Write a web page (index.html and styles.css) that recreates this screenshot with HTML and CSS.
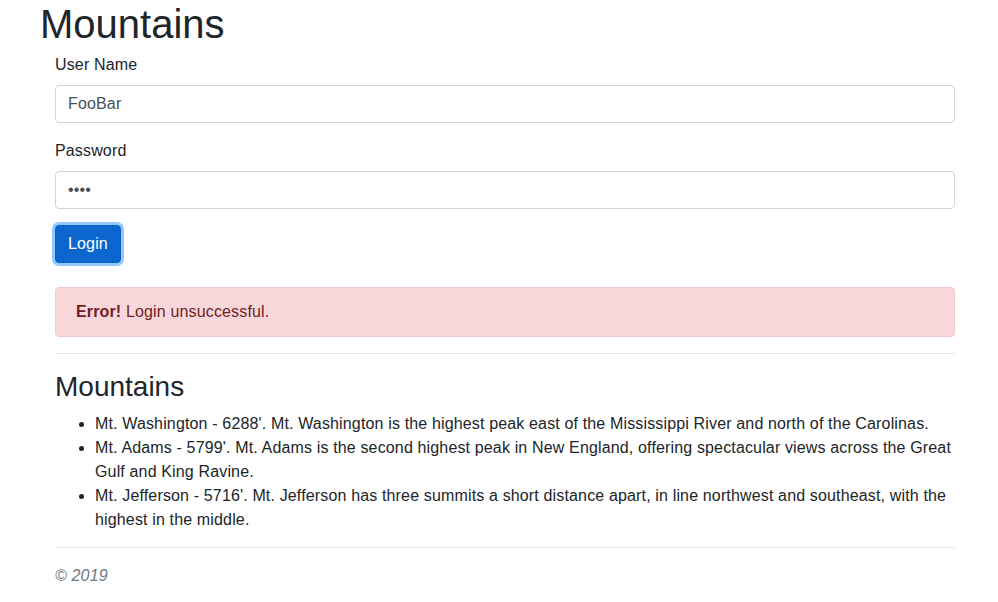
FILE: index.html
```html
<!DOCTYPE html>
<html>
<head>
<meta charset="utf-8">
<link rel="stylesheet" href="styles.css">
</head>
<body>
<div class="page">
  <h1 class="title">Mountains</h1>
  <form class="login">
    <div class="form-group">
      <label class="label" for="user">User Name</label>
      <input class="input" id="user" type="text" value="FooBar">
    </div>
    <div class="form-group">
      <label class="label" for="pass">Password</label>
      <input class="input" id="pass" type="password" value="1234">
    </div>
    <button class="btn" type="button">Login</button>
  </form>
  <div class="alert"><strong>Error!</strong> Login unsuccessful.</div>
  <hr class="rule">
  <h3 class="subtitle">Mountains</h3>
  <ul class="list">
    <li>Mt. Washington - 6288'. Mt. Washington is the highest peak east of the Mississippi River and north of the Carolinas.</li>
    <li>Mt. Adams - 5799'. Mt. Adams is the second highest peak in New England, offering spectacular views across the Great Gulf and King Ravine.</li>
    <li>Mt. Jefferson - 5716'. Mt. Jefferson has three summits a short distance apart, in line northwest and southeast, with the highest in the middle.</li>
  </ul>
  <hr class="rule">
  <footer class="footer">© 2019</footer>
</div>
</body>
</html>
```
FILE: styles.css
```css
html, body {
  margin: 0;
  padding: 0;
  background: #fff;
}
body {
  font-family: "Liberation Sans", Arial, sans-serif;
  font-size: 16px;
  line-height: 1.5;
  color: #212529;
  letter-spacing: 0.15px;
}
.page {
  width: 900px;
  margin-left: 55px;
}
.title {
  margin: 0 0 5px -15px;
  font-size: 40px;
  font-weight: 500;
  line-height: 1.2;
  letter-spacing: 0;
}
.form-group {
  margin-bottom: 16px;
}
.label {
  display: block;
  margin-bottom: 8px;
}
.input {
  display: block;
  box-sizing: border-box;
  width: 100%;
  height: 38px;
  padding: 6px 12px;
  font-family: inherit;
  font-size: 16px;
  line-height: 1.5;
  letter-spacing: 0.15px;
  color: #495057;
  background: #fff;
  border: 1px solid #ced4da;
  border-radius: 4px;
  outline: none;
}
.btn {
  display: inline-block;
  box-sizing: border-box;
  height: 38px;
  padding: 6px 12px;
  font-family: inherit;
  font-size: 16px;
  line-height: 1.5;
  letter-spacing: 0.15px;
  color: #fff;
  background: #0b66cd;
  border: 1px solid #0a62c4;
  border-radius: 4px;
  box-shadow: 0 0 0 3px rgba(38, 143, 255, 0.5);
}
.login {
  margin-bottom: 24px;
}
.alert {
  padding: 12px 20px;
  color: #721c24;
  background: #f8d7da;
  border: 1px solid #f5c6cb;
  border-radius: 4px;
  margin-bottom: 16px;
}
.alert strong {
  font-weight: 700;
}
.rule {
  margin: 0 0 16px;
  border: 0;
  border-top: 1px solid rgba(0, 0, 0, 0.1);
}
.subtitle {
  margin: 0 0 8px;
  font-size: 28px;
  font-weight: 500;
  line-height: 1.2;
  letter-spacing: 0;
}
.list {
  margin: 0 0 15px;
  padding-left: 40px;
}
.footer {
  font-style: italic;
  color: #6c757d;
}
```
